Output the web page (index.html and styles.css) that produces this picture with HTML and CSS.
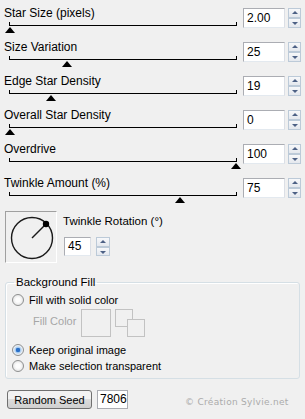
FILE: index.html
```html
<!DOCTYPE html>
<html lang="en">
<head>
    <meta charset="UTF-8">
    <title>Star Filter</title>
    <link rel="stylesheet" href="styles.css">
</head>
<body>
    <div class="panel">
        <div class="row">
            <div class="slide">
                <div class="label">Star Size (pixels)</div>
                <div class="track"><span class="thumb" style="left:0%"></span></div>
            </div>
            <div class="spin">
                <div class="field">2.00</div>
                <div class="arrows"><span class="up"></span><span class="down"></span></div>
            </div>
        </div>
        <div class="row">
            <div class="slide">
                <div class="label">Size Variation</div>
                <div class="track"><span class="thumb" style="left:25%"></span></div>
            </div>
            <div class="spin">
                <div class="field">25</div>
                <div class="arrows"><span class="up"></span><span class="down"></span></div>
            </div>
        </div>
        <div class="row">
            <div class="slide">
                <div class="label">Edge Star Density</div>
                <div class="track"><span class="thumb" style="left:18%"></span></div>
            </div>
            <div class="spin">
                <div class="field">19</div>
                <div class="arrows"><span class="up"></span><span class="down"></span></div>
            </div>
        </div>
        <div class="row">
            <div class="slide">
                <div class="label">Overall Star Density</div>
                <div class="track"><span class="thumb" style="left:0%"></span></div>
            </div>
            <div class="spin">
                <div class="field">0</div>
                <div class="arrows"><span class="up"></span><span class="down"></span></div>
            </div>
        </div>
        <div class="row">
            <div class="slide">
                <div class="label">Overdrive</div>
                <div class="track"><span class="thumb" style="left:100%"></span></div>
            </div>
            <div class="spin">
                <div class="field">100</div>
                <div class="arrows"><span class="up"></span><span class="down"></span></div>
            </div>
        </div>
        <div class="row">
            <div class="slide">
                <div class="label">Twinkle Amount (%)</div>
                <div class="track"><span class="thumb" style="left:75%"></span></div>
            </div>
            <div class="spin">
                <div class="field">75</div>
                <div class="arrows"><span class="up"></span><span class="down"></span></div>
            </div>
        </div>

        <div class="rotation">
            <div class="dial">
                <svg width="50" height="50" viewBox="0 0 50 50">
                    <circle cx="26" cy="26" r="20.5" fill="none" stroke="#1a1a1a" stroke-width="1.4"/>
                    <line x1="26" y1="26" x2="40" y2="12" stroke="#1a1a1a" stroke-width="1.4"/>
                    <circle cx="40" cy="12" r="3.2" fill="#000"/>
                </svg>
            </div>
            <div class="rot-side">
                <div class="label">Twinkle Rotation (°)</div>
                <div class="spin small">
                    <div class="field">45</div>
                    <div class="arrows"><span class="up"></span><span class="down"></span></div>
                </div>
            </div>
        </div>

        <fieldset class="group">
            <legend>Background Fill</legend>
            <div class="radio"><span class="dot"></span>Fill with solid color</div>
            <div class="fill-row">
                <span class="fill-label">Fill Color</span>
                <span class="swatch"></span>
                <span class="pair"><span class="sq a"></span><span class="sq b"></span></span>
            </div>
            <div class="radio"><span class="dot on"></span>Keep original image</div>
            <div class="radio"><span class="dot"></span>Make selection transparent</div>
        </fieldset>

        <div class="bottom">
            <button class="seed-btn">Random Seed</button>
            <div class="seed">7806</div>
            <div class="mark">© Création Sylvie.net</div>
        </div>
    </div>
</body>
</html>
```

FILE: styles.css
```css
body {
    margin: 0;
    background-color: #f0f0f0;
    font-family: "Liberation Sans", Arial, sans-serif;
    font-size: 12px;
    color: #000;
}

.panel {
    width: 305px;
    height: 419px;
    overflow: hidden;
}

.row {
    display: flex;
    height: 34px;
}

.slide {
    width: 240px;
}

.label {
    padding: 6px 0 0 4px;
    line-height: 14px;
    white-space: nowrap;
}

.track {
    position: relative;
    margin: 2px 0 0 9px;
    width: 226px;
    height: 3px;
    border: 1px solid #000;
    border-top: none;
}

.thumb {
    position: absolute;
    top: 5px;
    margin-left: -5px;
    width: 0;
    height: 0;
    border-left: 5px solid transparent;
    border-right: 5px solid transparent;
    border-bottom: 6px solid #000;
}

.spin {
    display: flex;
    margin: 8px 0 0 3px;
}

.field {
    box-sizing: border-box;
    width: 42px;
    height: 20px;
    padding: 2px 0 0 3px;
    background: #fff;
    border: 1px solid #abadb3;
    border-right-color: #dbdfe6;
    border-bottom-color: #e3e9ef;
    line-height: 15px;
}

.arrows {
    display: flex;
    flex-direction: column;
    margin-left: 3px;
    width: 13px;
}

.arrows span {
    position: relative;
    box-sizing: border-box;
    height: 10px;
    border: 1px solid #bccad8;
    background: linear-gradient(#f7f8fa, #e4e8ee);
}

.arrows span::after {
    content: "";
    position: absolute;
    left: 3px;
    top: 2px;
    border-left: 3px solid transparent;
    border-right: 3px solid transparent;
}

.arrows .up::after {
    border-bottom: 3px solid #4d6185;
}

.arrows .down::after {
    top: 3px;
    border-top: 3px solid #4d6185;
}

.rotation {
    display: flex;
    margin: 7px 0 0 5px;
}

.dial {
    width: 50px;
    height: 50px;
    border: 1px solid;
    border-color: #a0a0a0 #ffffff #ffffff #a0a0a0;
}

.dial svg {
    display: block;
}

.rot-side .label {
    padding: 3px 0 0 6px;
    font-size: 11.5px;
}

.spin.small {
    margin: 9px 0 0 7px;
}

.spin.small .field {
    width: 27px;
    height: 19px;
    padding-top: 1px;
}

.spin.small .arrows {
    margin-left: 5px;
    width: 14px;
}

.spin.small .arrows span {
    height: 9.5px;
}

.group {
    margin: 12px 5px 0 5px;
    padding: 3px 0 4px 6px;
    border: 1px solid #d5dfe5;
    border-radius: 3px;
    box-shadow: inset 1px 1px 0 #fff;
    font-size: 11px;
}

.group legend {
    padding: 0 2px;
    margin-left: 2px;
    line-height: 14px;
    font-size: 11.5px;
}

.radio {
    display: flex;
    align-items: center;
    height: 16px;
    white-space: nowrap;
    font-size: 11px;
}

.dot {
    box-sizing: border-box;
    width: 12px;
    height: 12px;
    margin-right: 5px;
    border-radius: 50%;
    border: 1px solid #8e8f8f;
    background: radial-gradient(#fdfdfd 30%, #d8d8d8);
}

.dot.on {
    background: radial-gradient(#2a70c8 28%, #9fc6ee 34%, #e8eef4 60%);
}

.fill-row {
    display: flex;
    align-items: flex-start;
    height: 28px;
    margin: 1px 0 5px 0;
}

.fill-label {
    margin: 6px 0 0 21px;
    color: #a6a6a6;
}

.swatch {
    margin-left: 5px;
    width: 30px;
    height: 28px;
    box-sizing: border-box;
    border: 1px solid #c2c2c2;
}

.pair {
    position: relative;
    margin-left: 4px;
    width: 31px;
    height: 28px;
}

.sq {
    position: absolute;
    box-sizing: border-box;
    width: 18px;
    height: 18px;
    border: 1px solid #c2c2c2;
    background: #f0f0f0;
}

.sq.a {
    left: 0;
    top: 0;
}

.sq.b {
    left: 12px;
    top: 10px;
}

.bottom {
    display: flex;
    align-items: center;
    margin: 11px 0 0 7px;
}

.seed-btn {
    box-sizing: border-box;
    width: 85px;
    height: 19px;
    padding: 0;
    font-family: inherit;
    font-size: 11px;
    color: #000;
    border: 1px solid #707070;
    border-radius: 3px;
    background: linear-gradient(#f2f2f2 50%, #dcdcdc 50%, #cfcfcf);
}

.seed {
    box-sizing: border-box;
    margin-left: 5px;
    width: 31px;
    height: 19px;
    padding: 1px 0 0 2px;
    background: #fff;
    border: 1px solid #abadb3;
    line-height: 15px;
}

.mark {
    margin: 5px 0 0 57px;
    font-family: "DejaVu Sans", sans-serif;
    font-size: 9px;
    color: #ababab;
    letter-spacing: 0.3px;
}
```
